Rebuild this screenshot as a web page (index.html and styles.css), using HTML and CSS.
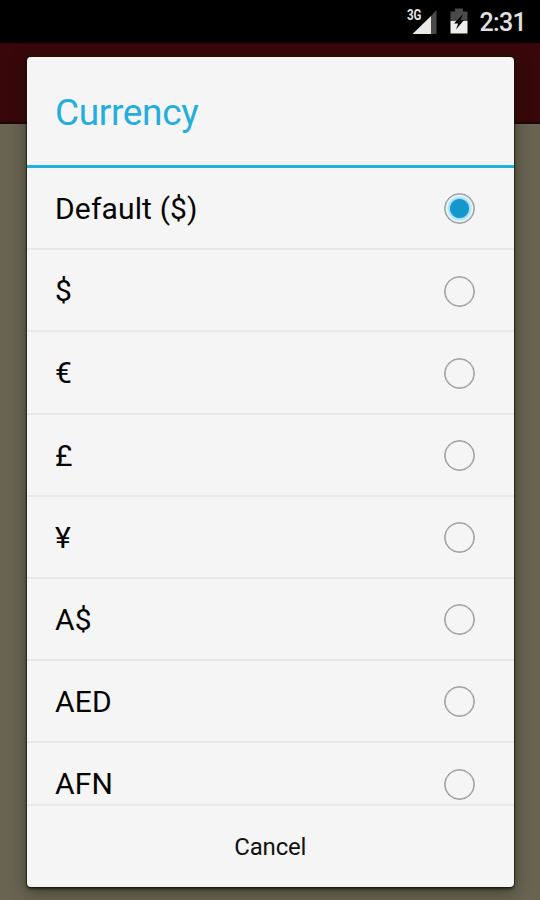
FILE: index.html
```
<!DOCTYPE html>
<html lang="en">
<head>
<meta charset="utf-8">
<title>Currency</title>
<link rel="stylesheet" href="styles.css">
</head>
<body>
<div class="screen">
  <header class="status">
    <svg class="signal" width="32" height="28" viewBox="0 0 32 28">
      <path d="M5.5 27L24 9V27Z" fill="#e9e9e9"/>
      <path d="M24 9L29.5 3V27H24Z" fill="#4a4a4a"/>
      <text class="network" transform="translate(0 13) scale(1 1.12)" textLength="14.5" lengthAdjust="spacingAndGlyphs">3G</text>
    </svg>
    <svg class="battery" width="18" height="27" viewBox="0 0 18 27">
      <path d="M0.5 3.5H5V0.5H13V3.5H17.5V13H0.5Z" fill="#4a4a4a"/>
      <path d="M0.5 13H17.5V25.5H0.5Z" fill="#eee"/>
      <path d="M13 6L4 15.5H8.2L6 21.5L14 12H10.5Z" fill="#000"/>
    </svg>
    <span class="time">2:31</span>
  </header>
  <div class="toolbar"></div>
  <main class="stage">
    <section class="dialog">
      <h1 class="title">Currency</h1>
      <ul class="list">
        <li class="row"><span>Default ($)</span><i class="radio checked"></i></li>
        <li class="row"><span>$</span><i class="radio"></i></li>
        <li class="row"><span>€</span><i class="radio"></i></li>
        <li class="row"><span>£</span><i class="radio"></i></li>
        <li class="row"><span>¥</span><i class="radio"></i></li>
        <li class="row"><span>A$</span><i class="radio"></i></li>
        <li class="row"><span>AED</span><i class="radio"></i></li>
        <li class="row"><span>AFN</span><i class="radio"></i></li>
      </ul>
      <button class="cancel">Cancel</button>
    </section>
  </main>
</div>
</body>
</html>
```
FILE: styles.css
```
* { box-sizing: border-box; }
body { margin: 0; font-family: Roboto, sans-serif; }
.screen {
  display: flex;
  flex-direction: column;
  width: 540px;
  height: 900px;
  overflow: hidden;
  background: #696352;
}
.status {
  flex: none;
  display: flex;
  align-items: flex-start;
  justify-content: flex-end;
  height: 43px;
  padding-right: 14px;
  background: #000;
}
.signal { margin: 7px 10.5px 0 0; }
.network { font: 700 13px Roboto, sans-serif; fill: #e6e6e6; }
.battery { margin: 8px 12px 0 0; }
.time {
  color: #e0e0e0;
  font-size: 25px;
  font-weight: 500;
  line-height: 30px;
  letter-spacing: -0.7px;
  margin-top: 8px;
}
.toolbar {
  flex: none;
  height: 81px;
  background: #380709;
  border-bottom: 2px solid #1c0706;
}
.stage {
  flex: none;
  margin-top: -67px;
  padding: 0 26.5px 0 27px;
}
.dialog {
  display: flex;
  flex-direction: column;
  height: 830px;
  background: #f5f5f5;
  border-radius: 4px;
  overflow: hidden;
  box-shadow: 0 0 0 1px rgba(20, 22, 0, .55), 0 2px 3px rgba(0, 0, 0, .6), 0 4px 16px rgba(15, 25, 5, .5);
}
.title {
  flex: none;
  height: 111px;
  margin: 0;
  padding-left: 28px;
  color: #25ade0;
  font-size: 37px;
  font-weight: 400;
  line-height: 112px;
  letter-spacing: -0.35px;
  border-bottom: 3px solid #25afe0;
}
.list {
  flex: none;
  height: 636px;
  margin: 0;
  padding: 0;
  overflow: hidden;
  list-style: none;
}
.row {
  display: flex;
  align-items: center;
  justify-content: space-between;
  height: 82.2px;
  padding: 0 39px 0 28px;
  border-bottom: 2px solid #e8e8e8;
  color: #050505;
  font-size: 30px;
  line-height: 40px;
  letter-spacing: 0.15px;
}
.row span { margin-top: 2px; }
.radio {
  width: 31px;
  height: 31px;
  border: 1.5px solid #999;
  border-radius: 50%;
  box-shadow: inset 0 0 0 .8px #aaa;
  margin-top: 1.5px;
}
.checked {
  background: radial-gradient(circle, #1597cb 0 9px, #a5dcef 10px, #e3f7fc 13px);
}
.cancel {
  flex: 1;
  border: 0;
  border-top: 2px solid #e8e8e8;
  padding: 1px 0 0;
  background: none;
  color: #111;
  font: 400 24px Roboto, sans-serif;
  letter-spacing: -0.2px;
}
```
